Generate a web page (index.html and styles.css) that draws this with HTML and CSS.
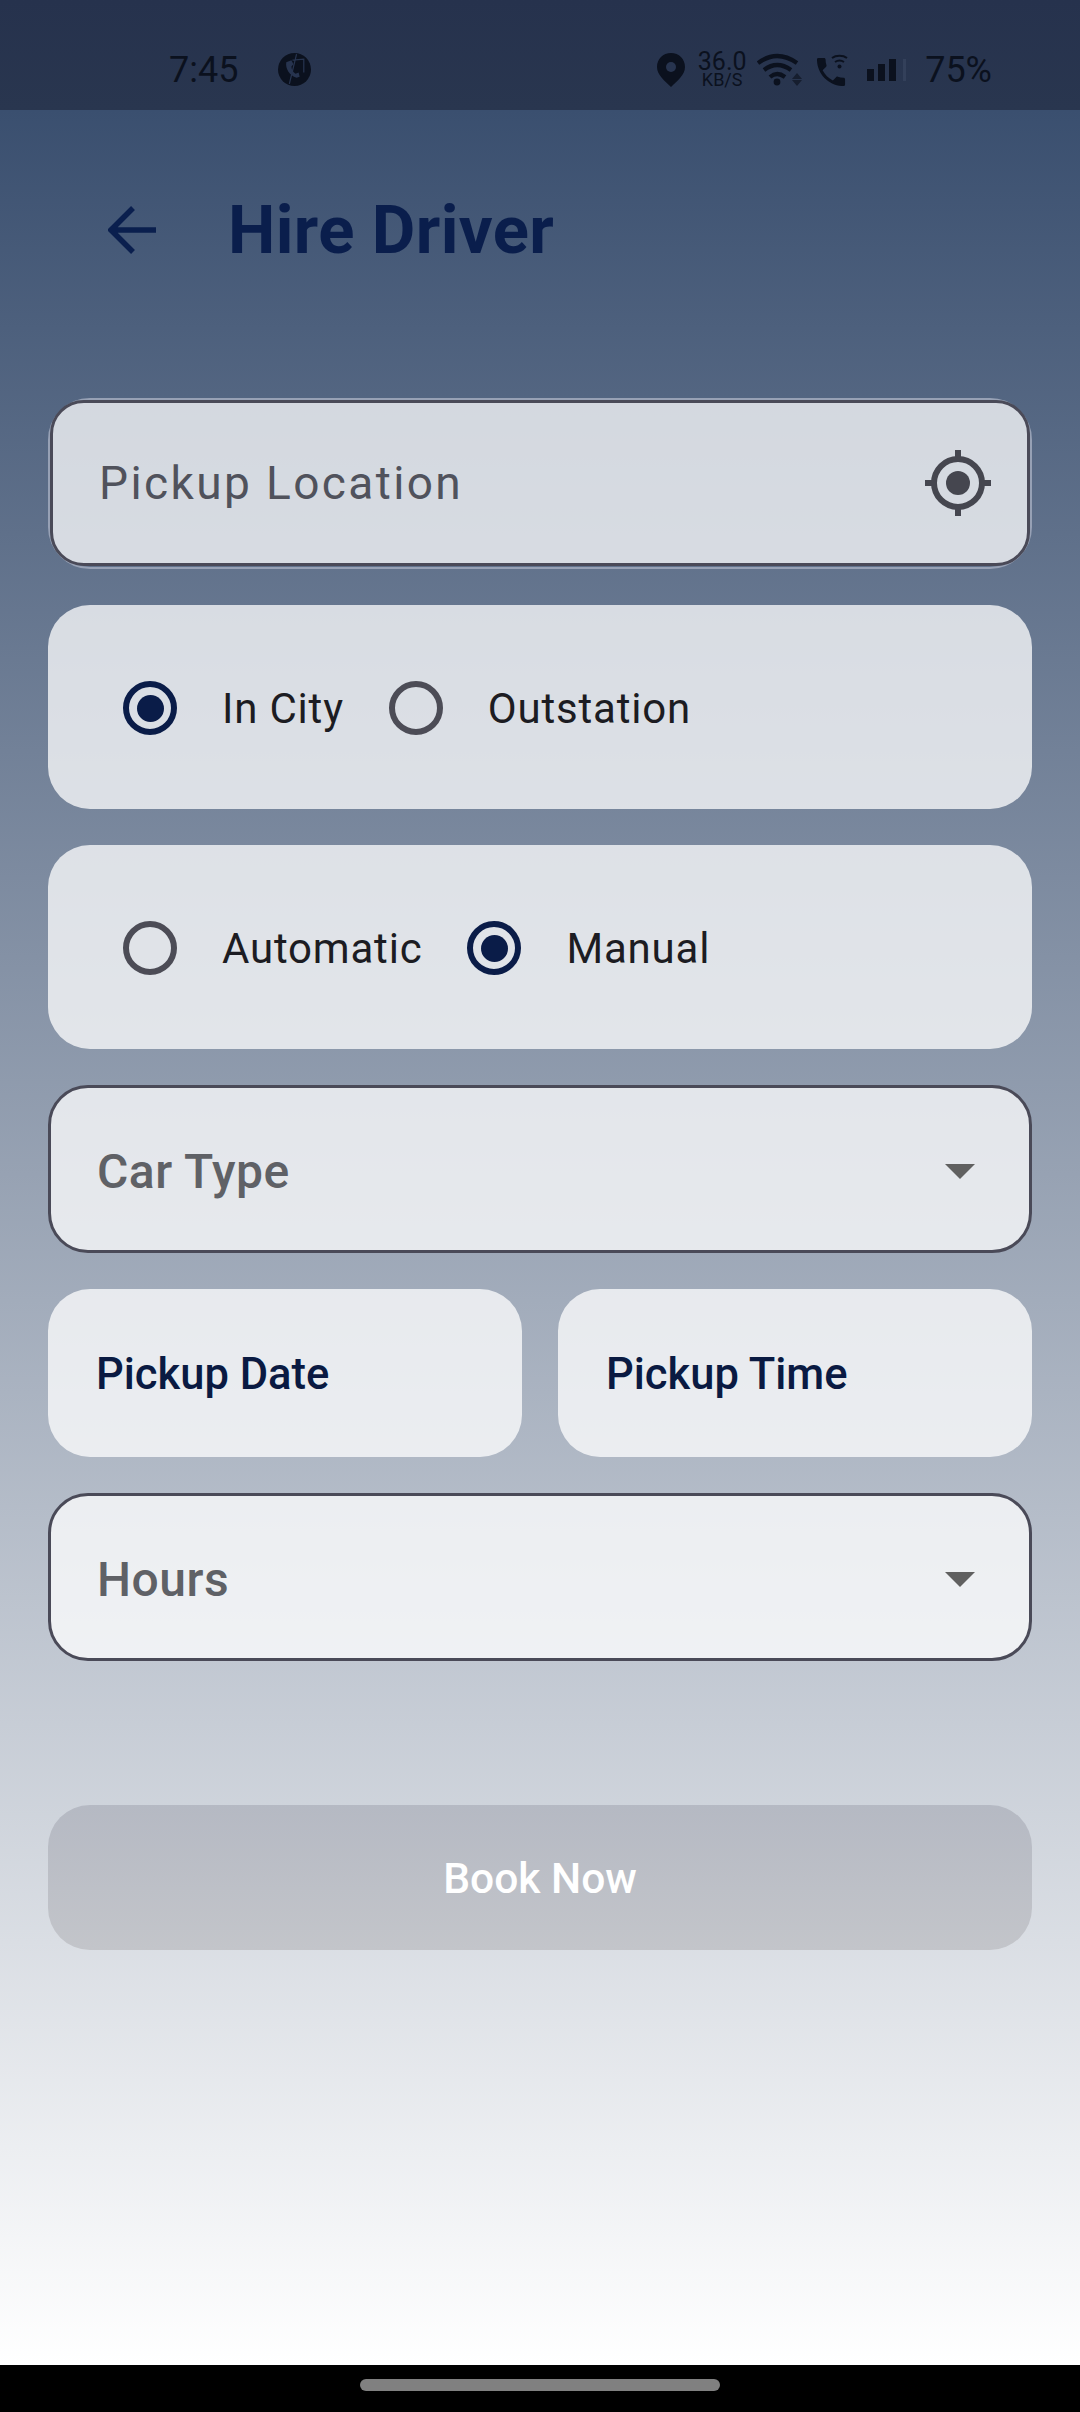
FILE: index.html
```html
<!DOCTYPE html>
<html lang="en">
<head>
  <meta charset="UTF-8">
  <meta name="viewport" content="width=device-width, initial-scale=1.0">
  <title>Hire Driver</title>
  <link rel="stylesheet" href="styles.css">
</head>
<body>
  <div class="page">
    <div class="status-bar">
      <div class="status-left">
        <span class="clock">7:45</span>
        <svg class="icon-app" viewBox="0 0 32 32">
          <circle cx="16" cy="16" r="16" fill="#0b111e"/>
          <path d="M8 9c-1 6 3 13 10 15l3-1-1-4-3 1c-2-1-4-4-4-7l2-2-2-4z" fill="#27344f"/>
          <path d="M14 7l11-1v13M11 30L18 1" fill="none" stroke="#27344f" stroke-width="1.2"/>
        </svg>
      </div>
      <div class="status-right">
        <svg class="icon-pin" viewBox="0 0 28 34">
          <path d="M14 0C6 0 0 6 0 14c0 8 8 14 14 20 6-6 14-12 14-20C28 6 22 0 14 0z" fill="#0b111e"/>
          <circle cx="14" cy="14" r="5" fill="#27344f"/>
        </svg>
        <div class="speed">
          <span class="speed-value">36.0</span>
          <span class="speed-unit">KB/S</span>
        </div>
        <svg class="icon-wifi" viewBox="0 0 46 34">
          <g fill="none" stroke="#0b111e" stroke-width="4.2">
            <path d="M1 10Q20 -4 40 10"/>
            <path d="M7 17Q20 7 34 17"/>
            <path d="M13 24Q20 18 28 24"/>
          </g>
          <circle cx="20" cy="29" r="3.4" fill="#0b111e"/>
          <path d="M35 26l5-6 5 6zM35 27l5 6 5-6z" fill="#161e2f"/>
        </svg>
        <svg class="icon-call" viewBox="0 0 31 32">
          <path transform="translate(-4.7 -0.7) scale(1.56)" d="M6.6 10.8c1.4 2.8 3.8 5.1 6.6 6.6l2.2-2.2c.3-.3.7-.4 1-.2 1.1.4 2.3.6 3.6.6.6 0 1 .4 1 1V20c0 .6-.4 1-1 1C10.6 21 3 13.4 3 4c0-.6.4-1 1-1h3.5c.6 0 1 .4 1 1 0 1.3.2 2.5.6 3.6.1.3 0 .7-.2 1z" fill="#0b111e"/>
          <g fill="none" stroke="#0b111e" stroke-width="2">
            <path d="M15 4c4-3 11-3 15 0"/>
            <path d="M18 8c3-2 6-2 9 0"/>
          </g>
          <circle cx="22.5" cy="12.5" r="2" fill="#0b111e"/>
        </svg>
        <div class="signal">
          <span class="bar bar-low"></span>
          <span class="bar bar-mid"></span>
          <span class="bar bar-high"></span>
          <span class="bar bar-empty"></span>
        </div>
        <span class="battery">75%</span>
      </div>
    </div>

    <div class="header">
      <svg class="icon-back" viewBox="0 0 48 48">
        <path d="M25 2L3 24l22 22M3 24h45" fill="none" stroke="#0a1f4e" stroke-width="5.5"/>
      </svg>
      <h1 class="title">Hire Driver</h1>
    </div>

    <div class="form">
      <div class="focus-ring">
        <div class="field field-location">
          <span class="placeholder">Pickup Location</span>
          <svg class="icon-locate" viewBox="0 0 68 68">
            <circle cx="34" cy="34" r="24" fill="none" stroke="#45464f" stroke-width="6"/>
            <circle cx="34" cy="34" r="12" fill="#45464f"/>
            <path d="M34 1v10M34 57v10M1 34h10M57 34h10" stroke="#45464f" stroke-width="6"/>
          </svg>
        </div>
      </div>

      <div class="card radio-row">
        <span class="radio radio-on"></span>
        <span class="radio-label">In City</span>
        <span class="radio"></span>
        <span class="radio-label">Outstation</span>
      </div>

      <div class="card radio-row">
        <span class="radio"></span>
        <span class="radio-label">Automatic</span>
        <span class="radio radio-on"></span>
        <span class="radio-label">Manual</span>
      </div>

      <div class="field field-select">
        <span class="select-text">Car Type</span>
        <span class="caret"></span>
      </div>

      <div class="date-row">
        <div class="card date-card">Pickup Date</div>
        <div class="card date-card">Pickup Time</div>
      </div>

      <div class="field field-select">
        <span class="select-text">Hours</span>
        <span class="caret"></span>
      </div>

      <button class="book">Book Now</button>
    </div>

    <div class="nav-bar">
      <span class="nav-pill"></span>
    </div>
  </div>
</body>
</html>
```

FILE: styles.css
```css
* {
  margin: 0;
  padding: 0;
  box-sizing: border-box;
}

body {
  width: 1080px;
  height: 2412px;
  overflow: hidden;
  font-family: Roboto, sans-serif;
}

.page {
  height: 2412px;
  display: flex;
  flex-direction: column;
  background: linear-gradient(180deg, #3a4f6f 110px, #ffffff 2365px);
}

/* status bar */
.status-bar {
  height: 110px;
  flex: none;
  display: flex;
  justify-content: space-between;
  align-items: center;
  padding: 29px 88px 0 169px;
  background: linear-gradient(180deg, #26324d, #29364f);
  color: #0b111e;
}

.status-left,
.status-right {
  display: flex;
  align-items: center;
}

.clock {
  font-size: 36px;
  line-height: 40px;
}

.icon-app {
  width: 33px;
  height: 33px;
  margin-left: 40px;
}

.icon-pin {
  width: 28px;
  height: 34px;
}

.speed {
  width: 50px;
  margin: 0 10px 0 12px;
  display: flex;
  flex-direction: column;
  align-items: center;
}

.speed-value {
  font-size: 25px;
  line-height: 20px;
}

.speed-unit {
  font-size: 18px;
  line-height: 15px;
}

.icon-wifi {
  width: 46px;
  height: 34px;
}

.icon-call {
  width: 31px;
  height: 32px;
  margin-left: 14px;
}

.signal {
  display: flex;
  align-items: flex-end;
  gap: 4px;
  height: 22px;
  margin-left: 19px;
}

.bar {
  width: 7px;
  background: #0b111e;
}

.bar-low { height: 12px; }
.bar-mid { height: 17px; }
.bar-high { height: 22px; }
.bar-empty { height: 22px; width: 3px; margin-left: 3px; background: #33405a; }

.battery {
  font-size: 36px;
  line-height: 40px;
  margin-left: 19px;
}

/* header */
.header {
  height: 240px;
  flex: none;
  display: flex;
  align-items: center;
  padding-left: 108px;
}

.icon-back {
  width: 48px;
  height: 48px;
}

.title {
  margin-left: 72px;
  font-size: 67px;
  font-weight: 700;
  letter-spacing: .4px;
  color: #0a1e4c;
}

/* form */
.form {
  flex: 1;
  margin-top: 48px;
  padding: 0 48px;
  display: flex;
  flex-direction: column;
  gap: 36px;
}

.focus-ring {
  height: 171px;
  padding-bottom: 1px;
  border: 2px solid #97a1b5;
  border-radius: 42px;
}

.field {
  border: 3px solid #4a4a58;
  border-radius: 40px;
  background: rgba(255, 255, 255, .75);
  display: flex;
  align-items: center;
  justify-content: space-between;
}

.field-location {
  height: 100%;
  padding: 0 35px 0 46px;
  border-radius: 34px;
}

.placeholder {
  font-size: 46px;
  letter-spacing: 2.4px;
  color: #50525c;
}

.icon-locate {
  width: 68px;
  height: 68px;
}

.field-select {
  height: 168px;
  padding: 4px 54px 0 46px;
}

.select-text {
  font-size: 48px;
  font-weight: 500;
  letter-spacing: .5px;
  color: #5f6166;
}

.caret {
  width: 0;
  height: 0;
  border-left: 15px solid transparent;
  border-right: 15px solid transparent;
  border-top: 15px solid #606060;
}

.card {
  background: rgba(255, 255, 255, .75);
  border-radius: 42px;
}

.radio-row {
  height: 204px;
  display: flex;
  align-items: center;
  padding: 2px 0 0 75px;
  gap: 45px;
}

.radio {
  width: 54px;
  height: 54px;
  flex: none;
  display: flex;
  align-items: center;
  justify-content: center;
  border: 6px solid #4c4c56;
  border-radius: 50%;
}

.radio-on {
  border-color: #0a1c48;
}

.radio-on::after {
  content: "";
  width: 27px;
  height: 27px;
  border-radius: 50%;
  background: #0a1c48;
}

.radio-label {
  font-size: 42px;
  letter-spacing: .8px;
  color: #1c1c22;
}

.date-row {
  display: flex;
  gap: 36px;
}

.date-card {
  flex: 1;
  height: 168px;
  display: flex;
  align-items: center;
  padding: 2px 0 0 48px;
  font-size: 43.5px;
  font-weight: 500;
  color: #0a1a42;
}

.book {
  height: 145px;
  margin-top: 108px;
  padding-top: 2px;
  border: none;
  border-radius: 42px;
  background: linear-gradient(180deg, #b5b9c3, #c3c5ca);
  font-family: Roboto, sans-serif;
  font-size: 42.5px;
  font-weight: 500;
  color: #ffffff;
}

/* nav bar */
.nav-bar {
  height: 47px;
  flex: none;
  display: flex;
  justify-content: center;
  padding-top: 14px;
  background: #000000;
}

.nav-pill {
  width: 360px;
  height: 12px;
  border-radius: 6px;
  background: #808080;
}
```
